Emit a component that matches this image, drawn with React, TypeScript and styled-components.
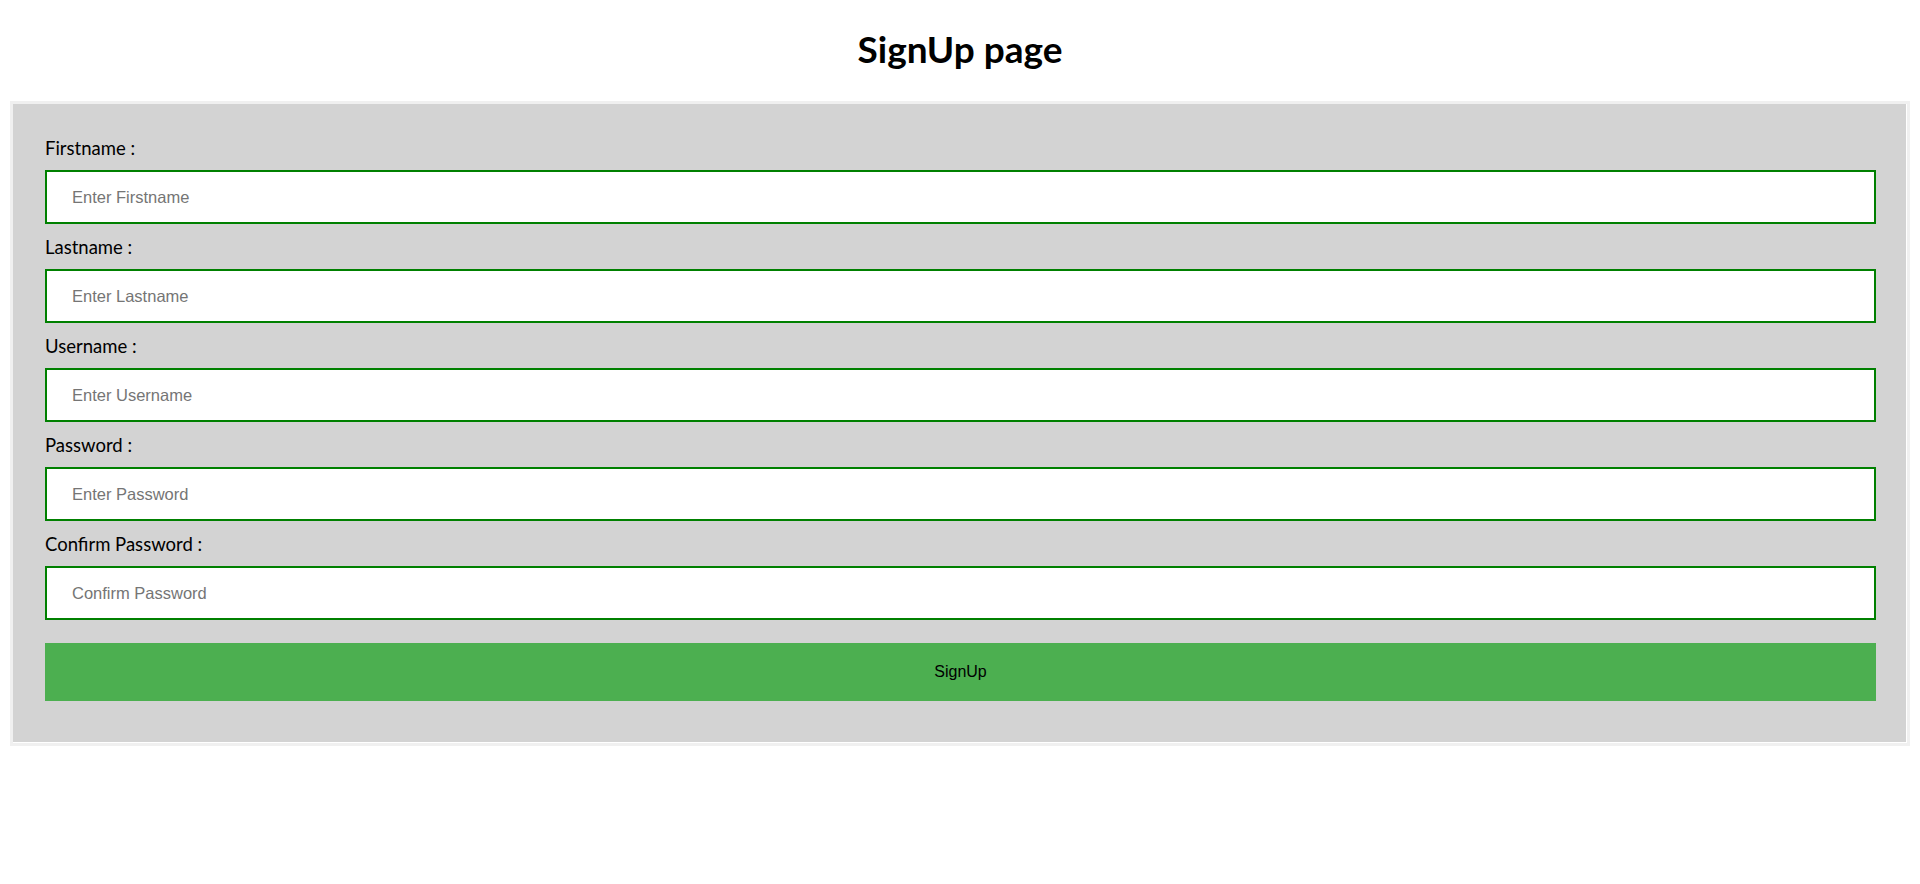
import React from "react";
import styled, { createGlobalStyle } from "styled-components";

const GlobalStyle = createGlobalStyle`
  html, body {
    margin: 0;
    padding: 0;
    background: #ffffff;
  }
  body {
    font-family: Lato, "Open Sans", sans-serif;
    color: #000000;
  }
  * {
    box-sizing: border-box;
  }
`;

const Page = styled.div`
  display: flex;
  flex-direction: column;
  padding: 0 10px;
`;

const Title = styled.h1`
  margin: 27px 0 30px;
  font-family: Lato, "Open Sans", sans-serif;
  font-weight: 700;
  font-size: 37px;
  line-height: 44px;
  text-align: center;
  color: #000;
`;

const Form = styled.form`
  display: flex;
  flex-direction: column;
  background: #d3d3d3;
  border: 3px solid #f0f0f0;
  box-shadow: inset -1px -1px 0 #ffffff;
  padding: 34px 31px 42px 32px;
`;

const Field = styled.div`
  display: flex;
  flex-direction: column;
  padding-bottom: 13px;
`;

const Label = styled.label`
  font-family: Lato, "Open Sans", sans-serif;
  font-size: 18.5px;
  line-height: 20px;
  color: #000;
  margin-bottom: 12px;
`;

const Input = styled.input`
  display: block;
  width: 100%;
  height: 54px;
  padding: 0 25px;
  border: 2px solid #008000;
  background: #ffffff;
  font-family: "Liberation Sans", Arial, sans-serif;
  font-size: 16.5px;
  color: #000;
  outline: none;

  &::placeholder {
    color: #757575;
    opacity: 1;
  }
`;

const SubmitButton = styled.button`
  margin-top: 10px;
  width: 100%;
  height: 58px;
  border: none;
  background: #4caf50;
  font-family: "Liberation Sans", Arial, sans-serif;
  font-size: 16px;
  color: #000;
  cursor: pointer;
`;

const fields = [
  { id: "firstname", label: "Firstname :", placeholder: "Enter Firstname", type: "text" },
  { id: "lastname", label: "Lastname :", placeholder: "Enter Lastname", type: "text" },
  { id: "username", label: "Username :", placeholder: "Enter Username", type: "text" },
  { id: "password", label: "Password :", placeholder: "Enter Password", type: "password" },
  { id: "confirm", label: "Confirm Password :", placeholder: "Confirm Password", type: "password" },
];

export default function App() {
  return (
    <>
      <GlobalStyle />
      <Page>
        <Title>SignUp page</Title>
        <Form onSubmit={(e) => e.preventDefault()}>
          {fields.map((f) => (
            <Field key={f.id}>
              <Label htmlFor={f.id}>{f.label}</Label>
              <Input id={f.id} type={f.type} placeholder={f.placeholder} />
            </Field>
          ))}
          <SubmitButton type="submit">SignUp</SubmitButton>
        </Form>
      </Page>
    </>
  );
}
